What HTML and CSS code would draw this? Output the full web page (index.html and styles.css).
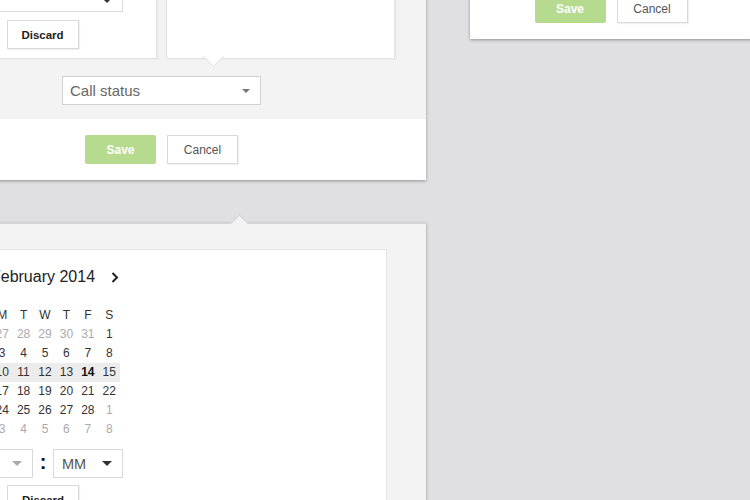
FILE: index.html
```html
<!DOCTYPE html>
<html>
<head>
<meta charset="utf-8">
<link rel="stylesheet" href="styles.css">
</head>
<body>
  <div class="panel panel-a">
    <div class="panel-body">
      <div class="cards">
        <div class="card card-left">
          <div class="select select-wide"><span class="sel-text"></span><span class="caret caret-low"></span></div>
          <button class="btn btn-ghost btn-discard">Discard</button>
        </div>
        <div class="card card-right">
          <span class="pointer-down"></span>
        </div>
      </div>
      <div class="select select-status"><span class="sel-text">Call status</span><span class="caret caret-mid"></span></div>
    </div>
    <div class="panel-footer">
      <button class="btn btn-save">Save</button>
      <button class="btn btn-ghost btn-cancel">Cancel</button>
    </div>
  </div>

  <div class="panel panel-c">
    <div class="panel-footer footer-c">
      <button class="btn btn-save">Save</button>
      <button class="btn btn-ghost btn-cancel">Cancel</button>
    </div>
  </div>

  <div class="panel panel-b">
    <span class="pointer-up"></span>
    <div class="cal-card">
      <div class="picker">
        <div class="cal-head">
          <svg class="chev" width="8" height="11" viewBox="0 0 8 11"><path d="M6.5 1 L2 5.5 L6.5 10" fill="none" stroke="#222" stroke-width="2"/></svg>
          <span class="cal-title">February 2014</span>
          <svg class="chev" width="8" height="11" viewBox="0 0 8 11"><path d="M1.5 1 L6 5.5 L1.5 10" fill="none" stroke="#222" stroke-width="2"/></svg>
        </div>
        <div class="cal-grid">
          <div class="week week-head"><span>S</span><span>M</span><span>T</span><span>W</span><span>T</span><span>F</span><span>S</span></div>
          <div class="week"><span class="out">26</span><span class="out">27</span><span class="out">28</span><span class="out">29</span><span class="out">30</span><span class="out">31</span><span>1</span></div>
          <div class="week"><span>2</span><span>3</span><span>4</span><span>5</span><span>6</span><span>7</span><span>8</span></div>
          <div class="week week-current"><span>9</span><span>10</span><span>11</span><span>12</span><span>13</span><span class="today">14</span><span>15</span></div>
          <div class="week"><span>16</span><span>17</span><span>18</span><span>19</span><span>20</span><span>21</span><span>22</span></div>
          <div class="week"><span>23</span><span>24</span><span>25</span><span>26</span><span>27</span><span>28</span><span class="out">1</span></div>
          <div class="week"><span class="out">2</span><span class="out">3</span><span class="out">4</span><span class="out">5</span><span class="out">6</span><span class="out">7</span><span class="out">8</span></div>
        </div>
        <div class="time-row">
          <div class="select select-time"><span class="sel-text">HH</span><span class="caret caret-light"></span></div>
          <div class="colon">:</div>
          <div class="select select-time"><span class="sel-text">MM</span><span class="caret"></span></div>
        </div>
        <button class="btn btn-ghost btn-discard">Discard</button>
      </div>
    </div>
  </div>
</body>
</html>
```

FILE: styles.css
```css
html, body {
  margin: 0;
  padding: 0;
}
body {
  width: 750px;
  height: 500px;
  overflow: hidden;
  position: relative;
  background: #e0e0e2;
  font-family: "Liberation Sans", Arial, sans-serif;
  color: #333;
}

/* Panels: windows on a free canvas */
.panel {
  position: absolute;
  background: #fff;
  box-shadow: 0 1px 3px rgba(0, 0, 0, 0.35);
}
.panel-a {
  left: -103px;
  top: -60px;
  width: 529px;
}
.panel-body {
  background: #f3f3f3;
  padding: 19px 31px 14px;
}
.cards {
  display: flex;
  gap: 9px;
  height: 100px;
}
.card {
  flex: 1;
  box-sizing: border-box;
  background: #fff;
  border: 1px solid #e3e3e3;
  box-shadow: 2px 1px 0 #ececec;
  position: relative;
}
.card-left {
  display: flex;
  flex-direction: column;
  justify-content: flex-end;
  align-items: center;
  padding-bottom: 9px;
}
.select-wide {
  width: 160px;
}
.pointer-down {
  position: absolute;
  left: 39px;
  bottom: -6px;
  width: 14px;
  height: 14px;
  background: #fff;
  border-right: 1px solid #e3e3e3;
  border-bottom: 1px solid #e3e3e3;
  transform: rotate(45deg);
}

/* Selects */
.select {
  box-sizing: border-box;
  height: 29px;
  background: #fff;
  border: 1px solid #d9d9d9;
  display: flex;
  align-items: center;
  justify-content: space-between;
  padding: 0 10px 0 8px;
  font-size: 14.5px;
  color: #555;
}
.select-status {
  width: 199px;
  margin: 17px auto 0;
  border-color: #d2d2d2;
  color: #666;
  font-size: 15px;
  padding-left: 7px;
}
.select-time {
  width: 70px;
}
.caret {
  width: 0;
  height: 0;
  border-left: 5px solid transparent;
  border-right: 5px solid transparent;
  border-top: 5px solid #333;
}
.caret-low {
  margin-top: 6px;
}
.caret-light {
  border-top-color: #aaa;
}
.caret-mid {
  border-top-color: #777;
  border-left-width: 4.5px;
  border-right-width: 4.5px;
  border-top-width: 4.5px;
}

.time-row {
  display: flex;
  width: 160px;
  margin-top: 10.5px;
}
.colon {
  width: 20px;
  text-align: center;
  font-size: 20px;
  font-weight: bold;
  line-height: 27px;
  color: #111;
}

/* Buttons */
.btn {
  box-sizing: border-box;
  width: 71px;
  height: 29px;
  font-family: "Liberation Sans", Arial, sans-serif;
  padding: 0;
  cursor: pointer;
}
.btn-save {
  background: #b6db8f;
  border: none;
  border-radius: 2px;
  color: #fff;
  font-weight: bold;
  font-size: 12px;
}
.btn-ghost {
  background: #fff;
  border: 1px solid #dadada;
  box-shadow: 1px 1px 1px rgba(0, 0, 0, 0.06);
}
.btn-cancel {
  color: #555;
  font-size: 12px;
}
.btn-discard {
  width: 72px;
  margin-top: 8px;
  color: #222;
  font-weight: bold;
  font-size: 11.5px;
}

.panel-footer {
  display: flex;
  justify-content: center;
  gap: 11px;
  padding: 16px 0;
}

.panel-c {
  left: 470px;
  top: -40px;
  width: 282px;
}
.footer-c {
  padding-top: 34px;
}

/* Calendar panel */
.panel-b {
  left: -103px;
  top: 223px;
  width: 529px;
  height: 300px;
  background: #f3f3f3;
  border-top: 1px solid #d3d3d3;
  box-sizing: border-box;
  padding: 25px 39px 0;
}
.pointer-up {
  position: absolute;
  left: 336px;
  top: -7px;
  width: 12px;
  height: 12px;
  background: #f3f3f3;
  border-top: 1px solid #cfcfcf;
  border-left: 1px solid #cfcfcf;
  transform: rotate(45deg);
}
.cal-card {
  box-sizing: border-box;
  height: 300px;
  background: #fff;
  border: 1px solid #e3e3e3;
  padding: 15px 0 0 26px;
}
.picker {
  width: 160px;
  display: flex;
  flex-direction: column;
  align-items: center;
}
.cal-head {
  box-sizing: border-box;
  width: 160px;
  height: 24px;
  padding: 0 4px;
  display: flex;
  align-items: center;
  justify-content: space-between;
}
.cal-title {
  font-size: 16px;
  color: #222;
}
.chev {
  display: block;
}
.cal-grid {
  width: 150px;
  margin: 16.5px 0 0 7px;
  align-self: flex-start;
}
.week {
  display: grid;
  grid-template-columns: repeat(7, 1fr);
  height: 19px;
  line-height: 19px;
  font-size: 12px;
  color: #333;
  text-align: center;
}
.week-current {
  background: #ececec;
}
.out {
  color: #aaa;
}
.today {
  font-weight: bold;
  color: #111;
}
.picker .btn-discard {
  margin-top: 7px;
}
```
